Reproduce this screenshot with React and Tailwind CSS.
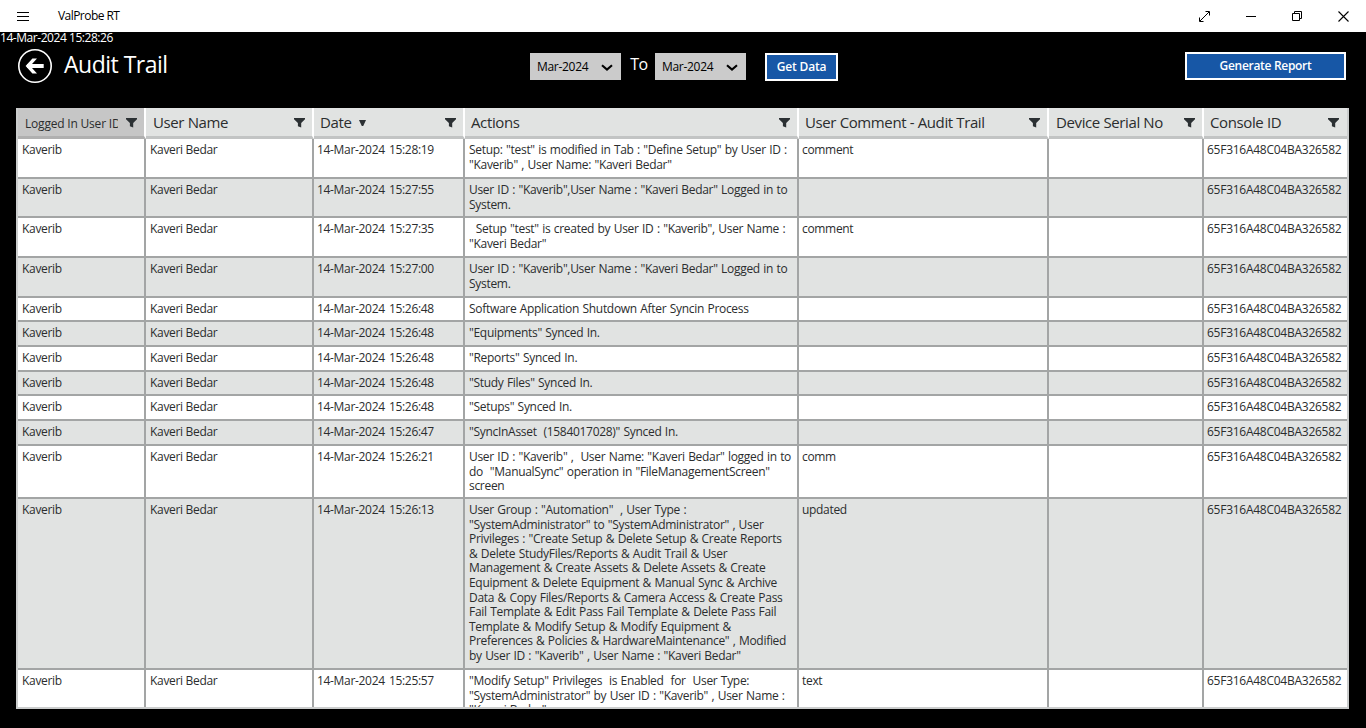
import React from "react";

const FILTER = (
  <svg className="mt-[2px] h-[10px] w-[11px] shrink-0" viewBox="0 0 11 10" fill="#2b3033">
    <path d="M0 0h11v1.2L7.2 5V9.4L3.9 8.2V5L0 1.2z" />
  </svg>
);

const COLS = "grid grid-cols-[128px_168px_151px_334px_250px_155px_143px]";

const HEADERS = [
  { label: "User Name", pad: "pl-[7px] pr-[7px]" },
  { label: "Date", sorted: true, pad: "pl-[6px] pr-[7px]" },
  { label: "Actions", pad: "pl-[6px] pr-[7px]" },
  { label: "User Comment - Audit Trail", pad: "pl-[6px] pr-[7px]" },
  { label: "Device Serial No", pad: "pl-[7px] pr-[7px]" },
  { label: "Console ID", pad: "pl-[6px] pr-[8px]", last: true },
];

const ROWS = [
  { h: "h-[40px]", t: "15:28:19", c: "comment", a: ['Setup: "test" is modified in Tab : "Define Setup" by User ID :', '"Kaverib" , User Name: "Kaveri Bedar"'] },
  { h: "h-[39px]", t: "15:27:55", c: "", a: ['User ID : "Kaverib",User Name : "Kaveri Bedar" Logged in to', "System."] },
  { h: "h-[40px]", t: "15:27:35", c: "comment", a: ['  Setup "test" is created by User ID : "Kaverib", User Name :', '"Kaveri Bedar"'] },
  { h: "h-[40px]", t: "15:27:00", c: "", a: ['User ID : "Kaverib",User Name : "Kaveri Bedar" Logged in to', "System."] },
  { h: "h-[24px]", t: "15:26:48", c: "", a: ["Software Application Shutdown After Syncin Process"] },
  { h: "h-[25px]", t: "15:26:48", c: "", a: ['"Equipments" Synced In.'] },
  { h: "h-[25px]", t: "15:26:48", c: "", a: ['"Reports" Synced In.'] },
  { h: "h-[24px]", t: "15:26:48", c: "", a: ['"Study Files" Synced In.'] },
  { h: "h-[25px]", t: "15:26:48", c: "", a: ['"Setups" Synced In.'] },
  { h: "h-[25px]", t: "15:26:47", c: "", a: ['"SyncInAsset  (1584017028)" Synced In.'] },
  { h: "h-[53px]", t: "15:26:21", c: "comm", a: ['User ID : "Kaverib" ,  User Name: "Kaveri Bedar" logged in to', 'do  "ManualSync" operation in "FileManagementScreen"', "screen"] },
  {
    h: "h-[171px]", t: "15:26:13", c: "updated",
    a: [
      'User Group : "Automation"  , User Type :',
      '"SystemAdministrator" to "SystemAdministrator" , User',
      'Privileges : "Create Setup & Delete Setup & Create Reports',
      "& Delete StudyFiles/Reports & Audit Trail & User",
      "Management & Create Assets & Delete Assets & Create",
      "Equipment & Delete Equipment & Manual Sync & Archive",
      "Data & Copy Files/Reports & Camera Access & Create Pass",
      "Fail Template & Edit Pass Fail Template & Delete Pass Fail",
      "Template & Modify Setup & Modify Equipment &",
      'Preferences & Policies & HardwareMaintenance" , Modified',
      'by User ID : "Kaverib" , User Name : "Kaveri Bedar"',
    ],
  },
  { h: "h-[60px]", t: "15:25:57", c: "text", a: ['"Modify Setup" Privileges  is Enabled  for  User Type:', '"SystemAdministrator" by User ID : "Kaverib" , User Name :', '"Kaveri Bedar"'] },
];

function Cell({ children, last, className = "pl-1" }) {
  return (
    <div className={`overflow-hidden whitespace-pre border-b-2 border-[#a3a5a5] pt-[4px] ${last ? "" : "border-r-2"} ${className}`}>
      {children}
    </div>
  );
}

function MonthSelect() {
  return (
    <div className="flex h-[27px] w-[91px] items-center justify-between bg-[#cbcbcb] pl-[7px] pr-[8px] text-[12px] text-black">
      <span className="pt-px tracking-[-0.3px]">Mar-2024</span>
      <svg className="mt-[3px] h-[8px] w-[12px]" viewBox="0 0 12 8" fill="none" stroke="#000" strokeWidth="2.1">
        <path d="M1 1.2L6 5.6L11 1.2" />
      </svg>
    </div>
  );
}

export default function App() {
  return (
    <div className="flex h-[728px] w-[1366px] flex-col overflow-hidden bg-black font-['Open_Sans','Noto_Sans',sans-serif]">
      <div className="flex h-8 shrink-0 items-center bg-white pl-[17px] text-[12px] text-black">
        <svg className="h-[9px] w-[12px]" viewBox="0 0 12 9" fill="#000" shapeRendering="crispEdges">
          <path d="M0 0h12v1H0zM0 4h12v1H0zM0 8h12v1H0z" />
        </svg>
        <span className="ml-[29px] tracking-[-0.55px]">ValProbe RT</span>
        <div className="ml-auto flex items-center pr-[17px]">
          <svg className="h-[11px] w-[11px]" viewBox="0 0 11 11" fill="none" stroke="#000">
            <path d="M1 10L10 1M6.5 .5H10.5V4.5M.5 6.5V10.5H4.5" />
          </svg>
          <svg className="ml-[36px] h-[11px] w-[10px]" viewBox="0 0 10 11" stroke="#000"><path d="M0 5.5H10" /></svg>
          <svg className="ml-[36px] h-[11px] w-[11px]" viewBox="0 0 11 11" fill="none" stroke="#000">
            <path d="M.5 2.5H7.5V9.5H.5zM2.5 2.5V.5H9.5V7.5H7.5" />
          </svg>
          <svg className="ml-[35px] h-[11px] w-[11px]" viewBox="0 0 11 11" stroke="#000" strokeWidth="1.1"><path d="M.5 .5L10.5 10.5M10.5 .5L.5 10.5" /></svg>
        </div>
      </div>

      <div className="h-[12px] shrink-0 text-[12px] leading-[12px] tracking-[-0.45px] text-white">14-Mar-2024 15:28:26</div>

      <div className="flex h-16 shrink-0 items-start pl-[18px] pr-5 text-white">
        <svg className="mt-[5px] h-[34px] w-[34px]" viewBox="0 0 34 34" fill="none" stroke="#fff">
          <circle cx="17" cy="17" r="16.2" strokeWidth="1.6" />
          <path d="M9 17H25.7" strokeWidth="4" />
          <path d="M7.6 17L14.4 9.5H19L12.2 17L19 24.5H14.4z" fill="#fff" stroke="none" />
        </svg>
        <h1 className="ml-[12px] mt-[2px] w-[466px] text-[23px] font-normal leading-[36px] tracking-[-0.5px]">Audit Trail</h1>
        <div className="mt-[9px] flex items-start">
          <MonthSelect />
          <span className="w-[34px] pl-[2px] text-center text-[16px] leading-[23px] tracking-[-0.4px]">To</span>
          <MonthSelect />
        </div>
        <button className="ml-[19px] mt-[9px] h-[28px] w-[73px] whitespace-nowrap border-2 border-white bg-[#1757a6] text-[12px] font-semibold leading-[24px] tracking-[-0.15px]">Get Data</button>
        <button className="ml-auto mt-[8px] h-[28px] w-[161px] border-2 border-white bg-[#1757a6] text-[12px] font-semibold leading-[24px] tracking-[-0.3px]">Generate Report</button>
      </div>

      <div className="ml-4 flex h-[601px] w-[1333px] flex-col overflow-hidden border-x-2 border-b-2 border-[#cbcdcd] bg-white text-[#2b2d2e]">
        <div className={`${COLS} h-[31px] shrink-0`}>
          <div className="flex items-center border-b-[3px] border-r-2 border-b-[#b0b0b0] border-r-white bg-[#c6c6c6] pl-[7px] pr-[7px]">
            <span className="w-[93px] overflow-hidden whitespace-nowrap pt-[4px] text-[12px] leading-[22px] tracking-[-0.2px]">Logged In User ID</span>
            <span className="ml-auto">{FILTER}</span>
          </div>
          {HEADERS.map((h) => (
            <div key={h.label} className={`flex items-center border-b-[3px] border-b-[#c2c4c4] bg-[#e1e3e2] ${h.pad} ${h.last ? "" : "border-r-2 border-r-white"}`}>
              <span className="whitespace-nowrap text-[15px] leading-[24px] tracking-[-0.38px]">{h.label}</span>
              {h.sorted && (
                <svg className="ml-[8px] mt-[2px] h-[6px] w-[7px]" viewBox="0 0 7 6" fill="#2b3033"><path d="M0 0H7L4.2 6H2.8z" /></svg>
              )}
              <span className="ml-auto">{FILTER}</span>
            </div>
          ))}
        </div>
        {ROWS.map((r, i) => (
          <div key={i} className={`${COLS} ${r.h} shrink-0 text-[12px] leading-[14.6px] tracking-[-0.32px] ${i % 2 ? "bg-[#e1e3e2]" : "bg-white"}`}>
            <Cell>Kaverib</Cell>
            <Cell>Kaveri Bedar</Cell>
            <Cell className="pl-[3px] tracking-[-0.32px] [word-spacing:1.4px]">{`14-Mar-2024 ${r.t}`}</Cell>
            <Cell className="pl-1 tracking-[-0.3px] [word-spacing:0.6px]">{r.a.map((l, k) => <div key={k}>{l}</div>)}</Cell>
            <Cell className="pl-[3px]">{r.c}</Cell>
            <Cell />
            <Cell last className="pl-[3px] tracking-[-0.26px]">65F316A48C04BA326582</Cell>
          </div>
        ))}
      </div>
    </div>
  );
}
